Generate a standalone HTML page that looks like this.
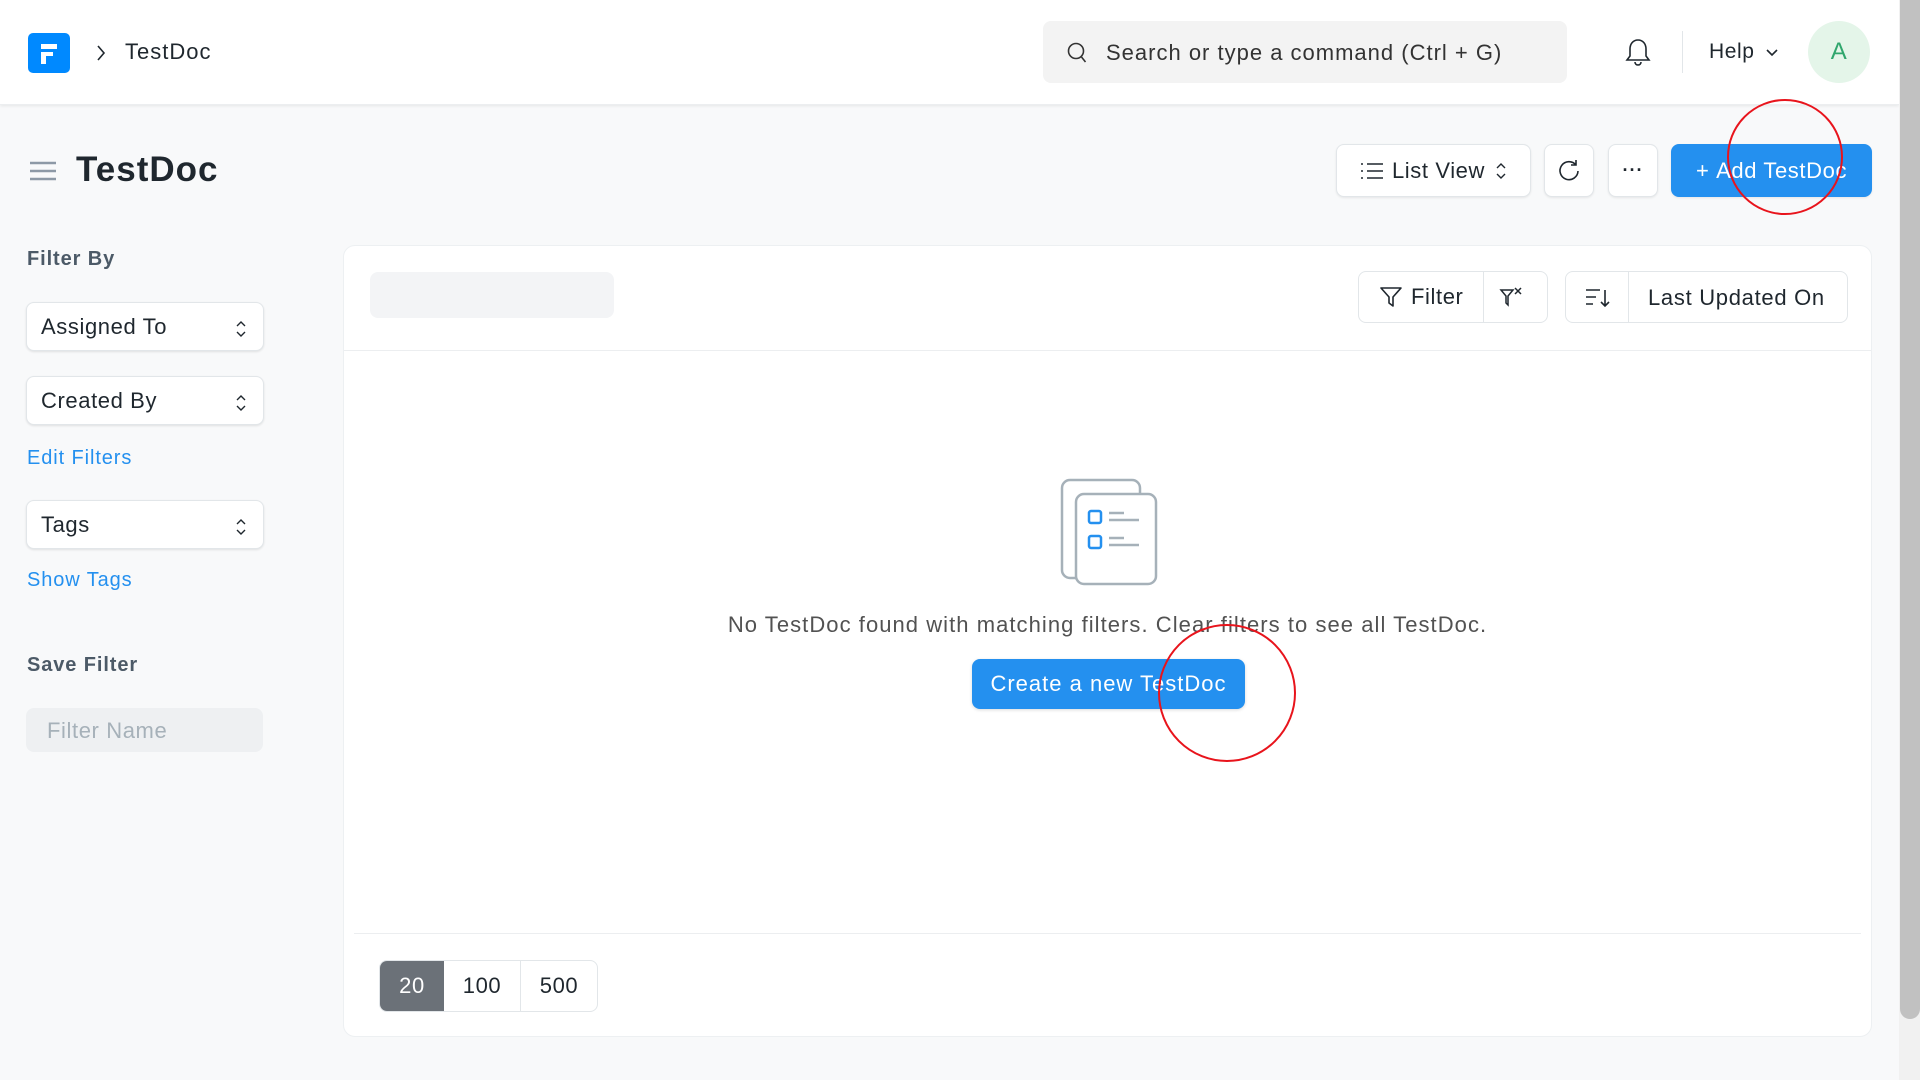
<!DOCTYPE html>
<html><head><meta charset="utf-8"><style>
*{box-sizing:border-box;margin:0;padding:0}
body{width:1920px;height:1080px;overflow:hidden;background:#f8f9fa;font-family:"Liberation Sans",sans-serif;color:#1f272e;position:relative;letter-spacing:0.6px}
.abs{position:absolute}
header{position:absolute;left:0;top:0;width:1899px;height:105px;background:#fff;box-shadow:0 1px 3px rgba(0,0,0,.08);border-bottom:1px solid #eceef0}
.btn{position:absolute;background:#fff;border:1px solid #e2e6e9;border-radius:8px;box-shadow:0 1px 2px rgba(0,0,0,.08);display:flex;align-items:center;justify-content:center;font-size:22px;color:#1f272e}
.sel{position:absolute;left:26px;width:238px;height:49px;background:#fff;border:1px solid #e2e6e9;border-radius:8px;box-shadow:0 1px 2px rgba(0,0,0,.1);font-size:22px;padding-left:14px;display:flex;align-items:center}
.sel svg{position:absolute;right:16px;top:16px}
.lnk{position:absolute;left:27px;color:#2490ef;font-size:20px;letter-spacing:0.9px}
.lbl{position:absolute;left:27px;color:#4c5a67;font-size:20px;font-weight:bold;letter-spacing:0.9px}
.ring{position:absolute;border:2px solid #e8141c;border-radius:50%}
</style></head><body>
<header>
 <div class="abs" style="left:28px;top:33px;width:42px;height:40px;background:#0089ff;border-radius:5px">
  <div class="abs" style="left:13px;top:11px;width:16px;height:5px;background:#fff"></div>
  <div class="abs" style="left:13px;top:19px;width:12px;height:4px;background:#fff"></div>
  <div class="abs" style="left:13px;top:19px;width:5px;height:12px;background:#fff"></div>
 </div>
 <svg class="abs" style="left:95px;top:44px" width="12" height="18"><path d="M3 2l6 7-6 7" stroke="#1f272e" stroke-width="1.6" fill="none"/></svg>
 <div class="abs" style="left:125px;top:39px;font-size:22px;letter-spacing:1px">TestDoc</div>
 <div class="abs" style="left:1043px;top:21px;width:524px;height:62px;background:#f3f3f3;border-radius:8px"></div>
 <svg class="abs" style="left:1066px;top:41px" width="22" height="24"><circle cx="10" cy="10" r="7.5" stroke="#333" stroke-width="1.6" fill="none"/><path d="M15.5 16l4 5" stroke="#333" stroke-width="1.6"/></svg>
 <div class="abs" style="left:1106px;top:40px;font-size:22px;color:#333;letter-spacing:1px">Search or type a command (Ctrl + G)</div>
 <svg class="abs" style="left:1624px;top:37px" width="28" height="32"><path d="M14 3c-5 0-8 4-8 9v7l-3 4h22l-3-4v-7c0-5-3-9-8-9z M11 25c0 2 1.5 3 3 3s3-1 3-3" stroke="#1f272e" stroke-width="1.6" fill="none"/></svg>
 <div class="abs" style="left:1682px;top:31px;width:1px;height:42px;background:#e2e6e9"></div>
 <div class="abs" style="left:1709px;top:40px;font-size:21px">Help</div>
 <svg class="abs" style="left:1765px;top:48px" width="14" height="10"><path d="M2 2l5 5 5-5" stroke="#1f272e" stroke-width="1.6" fill="none"/></svg>
 <div class="abs" style="left:1808px;top:21px;width:62px;height:62px;border-radius:50%;background:#e4f5e9;color:#30a66d;font-size:24px;display:flex;align-items:center;justify-content:center">A</div>
</header>
<div class="abs" style="left:1899px;top:0;width:21px;height:1080px;background:#f1f1f1"></div>
<div class="abs" style="left:1900px;top:0;width:20px;height:1019px;background:#c1c1c1;border-radius:0 0 10px 10px"></div>

<svg class="abs" style="left:29px;top:160px" width="28" height="22"><path d="M1 3h26M1 11h26M1 19h26" stroke="#8d99a6" stroke-width="2.4"/></svg>
<div class="abs" style="left:76px;top:150px;font-size:35px;font-weight:bold;letter-spacing:1px">TestDoc</div>

<div class="btn" style="left:1336px;top:144px;width:195px;height:53px">
 <svg width="24" height="20" style="margin-right:8px"><path d="M1 3h2M1 10h2M1 17h2M7 3h16M7 10h16M7 17h16" stroke="#1f272e" stroke-width="1.6"/></svg>List View
 <svg width="12" height="20" style="margin-left:10px"><path d="M2 7l4-4 4 4M2 13l4 4 4-4" stroke="#1f272e" stroke-width="1.4" fill="none"/></svg></div>
<div class="btn" style="left:1544px;top:144px;width:50px;height:53px"><svg width="24" height="26"><path d="M19 7a9 9 0 1 0 2 6M19 2v5h-5" stroke="#1f272e" stroke-width="1.6" fill="none"/></svg></div>
<div class="btn" style="left:1608px;top:144px;width:50px;height:53px;font-weight:bold;letter-spacing:1px;font-size:18px">···</div>
<div class="btn" style="left:1671px;top:144px;width:201px;height:53px;background:#2490ef;border-color:#2490ef;color:#fff">+&nbsp;Add TestDoc</div>

<div class="lbl" style="top:248px">Filter By</div>
<div class="sel" style="top:302px">Assigned To<svg width="12" height="20"><path d="M2 7l4-4 4 4M2 13l4 4 4-4" stroke="#1f272e" stroke-width="1.4" fill="none"/></svg></div>
<div class="sel" style="top:376px">Created By<svg width="12" height="20"><path d="M2 7l4-4 4 4M2 13l4 4 4-4" stroke="#1f272e" stroke-width="1.4" fill="none"/></svg></div>
<div class="lnk" style="top:447px">Edit Filters</div>
<div class="sel" style="top:500px">Tags<svg width="12" height="20"><path d="M2 7l4-4 4 4M2 13l4 4 4-4" stroke="#1f272e" stroke-width="1.4" fill="none"/></svg></div>
<div class="lnk" style="top:569px">Show Tags</div>
<div class="lbl" style="top:654px">Save Filter</div>
<div class="abs" style="left:26px;top:708px;width:237px;height:44px;background:#eef0f2;border-radius:8px;color:#a6b1b9;font-size:22px;padding:10px 0 0 21px">Filter Name</div>

<div class="abs" style="left:343px;top:245px;width:1529px;height:792px;background:#fff;border-radius:12px;border:1px solid #edf0f2">
 <div class="abs" style="left:26px;top:26px;width:244px;height:46px;background:#f3f4f6;border-radius:8px"></div>
 <div class="btn" style="left:1014px;top:25px;width:190px;height:52px;box-shadow:none;justify-content:flex-start">
  <svg width="24" height="24" style="margin:0 8px 0 20px"><path d="M2 3h20l-8 9v9l-4-3v-6z" stroke="#1f272e" stroke-width="1.6" fill="none" stroke-linejoin="round"/></svg>Filter
  <div class="abs" style="left:124px;top:0;width:1px;height:50px;background:#e2e6e9"></div>
  <svg class="abs" style="left:140px;top:13px" width="26" height="26"><path d="M2 5h12l-5 6v9l-2-2v-7z M16 3l6 6M22 3l-6 6" stroke="#1f272e" stroke-width="1.5" fill="none"/></svg>
 </div>
 <div class="btn" style="left:1221px;top:25px;width:283px;height:52px;box-shadow:none;justify-content:flex-start">
  <svg class="abs" style="left:18px;top:14px" width="28" height="24"><path d="M2 4h14M2 11h10M2 18h7M21 4v16M17 16l4 4 4-4" stroke="#1f272e" stroke-width="1.6" fill="none"/></svg>
  <div class="abs" style="left:62px;top:0;width:1px;height:50px;background:#e2e6e9"></div>
  <span class="abs" style="left:82px;top:13px;letter-spacing:0.7px">Last Updated On</span>
 </div>
 <div class="abs" style="left:0;top:104px;width:1527px;height:1px;background:#eceef0"></div>
 <svg class="abs" style="left:716px;top:232px" width="100" height="108"><rect x="2" y="2" width="78" height="98" rx="8" fill="#fff" stroke="#a6b1b9" stroke-width="2.5"/><rect x="16" y="16" width="80" height="90" rx="8" fill="#fff" stroke="#a6b1b9" stroke-width="2.5"/><rect x="29" y="33" width="12" height="12" rx="2" fill="none" stroke="#2490ef" stroke-width="2.5"/><rect x="29" y="58" width="12" height="12" rx="2" fill="none" stroke="#2490ef" stroke-width="2.5"/><path d="M49 35h15M49 42h30M49 60h15M49 67h30" stroke="#a6b1b9" stroke-width="2.5"/></svg>
 <div class="abs" style="left:0;top:366px;width:1527px;text-align:center;font-size:22px;color:#525252;letter-spacing:1.05px">No TestDoc found with matching filters. Clear filters to see all TestDoc.</div>
 <div class="abs" style="left:628px;top:413px;width:273px;height:50px;background:#2490ef;border-radius:8px;color:#fff;font-size:22px;display:flex;align-items:center;justify-content:center;box-shadow:0 1px 3px rgba(0,0,0,.15);letter-spacing:1px">Create a new TestDoc</div>
 <div class="abs" style="left:10px;top:687px;width:1507px;height:1px;background:#eceef0"></div>
 <div class="abs" style="left:35px;top:714px;width:219px;height:52px;border:1px solid #e2e6e9;border-radius:8px;display:flex;font-size:22px;overflow:hidden">
  <div style="width:64px;background:#6b7178;color:#fff;display:flex;align-items:center;justify-content:center">20</div>
  <div style="width:77px;border-right:1px solid #e2e6e9;display:flex;align-items:center;justify-content:center">100</div>
  <div style="flex:1;display:flex;align-items:center;justify-content:center">500</div>
 </div>
</div>

<div class="ring" style="left:1727px;top:99px;width:116px;height:116px"></div>
<div class="ring" style="left:1158px;top:624px;width:138px;height:138px"></div>
</body></html>
